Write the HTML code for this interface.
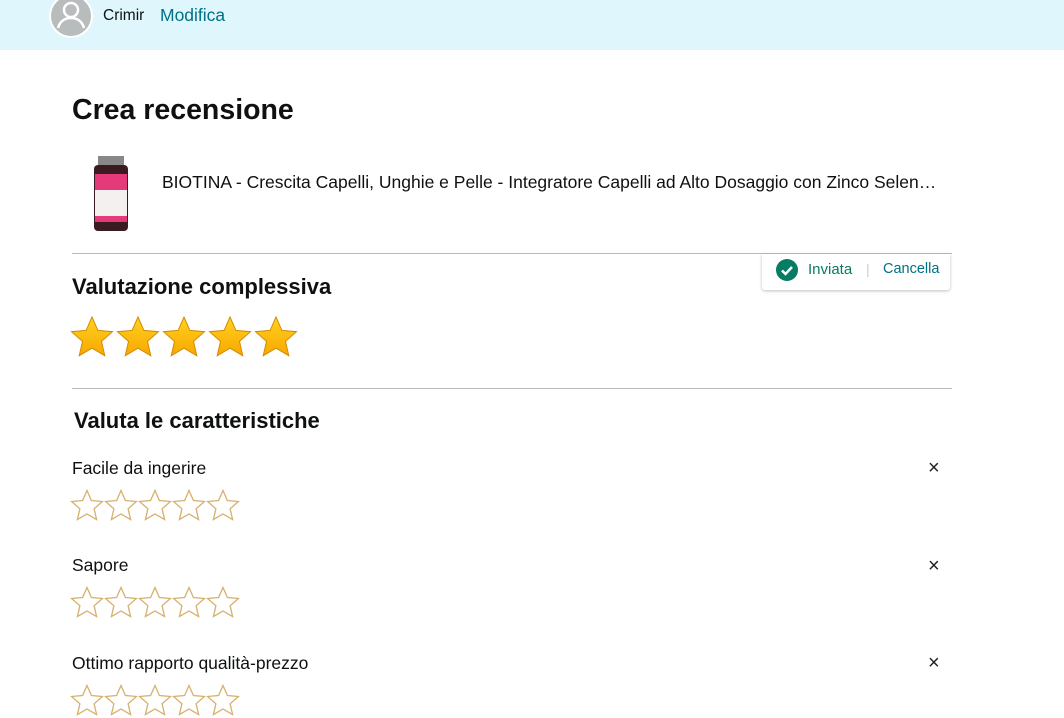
<!DOCTYPE html>
<html><head><meta charset="utf-8"><style>
body{margin:0;width:1064px;height:718px;overflow:hidden;background:#fff;font-family:"Liberation Sans",Arial,sans-serif;color:#0f1111;position:relative}
.top{position:absolute;left:0;top:0;width:1064px;height:50px;background:#dff7fc}
.abs{position:absolute}
hr{position:absolute;margin:0;border:0;border-top:1px solid #bbb;left:72px;width:880px}
.lbl{font-size:17.5px}
.x{font-size:20px;color:#222}
</style></head><body>
<div class="top"></div>
<svg class="abs" style="left:49px;top:-6px" width="44" height="44" viewBox="0 0 44 44"><circle cx="22" cy="22" r="21" fill="#b8bcbd" stroke="#fff" stroke-width="2"/><circle cx="22" cy="16" r="7" fill="none" stroke="#fff" stroke-width="2.5"/><path d="M9 34c2-7 7-10 13-10s11 3 13 10" fill="none" stroke="#fff" stroke-width="2.5"/></svg>
<div class="abs" style="left:103px;top:7px;font-size:15.5px">Crimir</div>
<div class="abs" style="left:160px;top:5px;font-size:17.5px;color:#007185">Modifica</div>
<div class="abs" style="left:72px;top:94px;font-size:28.5px;font-weight:bold">Crea recensione</div>
<svg class="abs" style="left:92px;top:156px" width="38" height="78" viewBox="0 0 38 78"><rect x="6" y="0" width="26" height="10" fill="#888"/><rect x="2" y="9" width="34" height="66" rx="4" fill="#3b1b22"/><rect x="3" y="18" width="32" height="16" fill="#e53a79"/><rect x="3" y="34" width="32" height="30" fill="#f4f0f0"/><rect x="3" y="60" width="32" height="6" fill="#e53a79"/></svg>
<div class="abs" style="left:162px;top:172px;font-size:17.5px">BIOTINA - Crescita Capelli, Unghie e Pelle - Integratore Capelli ad Alto Dosaggio con Zinco Selen…</div>
<hr style="top:253px">
<div class="abs" style="left:762px;top:254px;width:188px;height:36px;background:#fff;box-shadow:0 1px 3px rgba(0,0,0,.25);border-radius:0 0 3px 3px"></div>
<svg class="abs" style="left:776px;top:259px" width="22" height="22" viewBox="0 0 22 22"><circle cx="11" cy="11" r="11" fill="#067d62"/><path d="M6 11.5l3.5 3.5 6.5-7" fill="none" stroke="#fff" stroke-width="2.5"/></svg>
<div class="abs" style="left:808px;top:261px;font-size:15px;color:#067d62">Inviata</div>
<div class="abs" style="left:866px;top:261px;font-size:14px;color:#ccc">|</div>
<div class="abs" style="left:883px;top:261px;font-size:14.5px;color:#007185">Cancella</div>
<div class="abs" style="left:72px;top:274px;font-size:22px;font-weight:bold">Valutazione complessiva</div>
<svg class="abs" style="left:70px;top:316px" width="240" height="44" viewBox="0 0 240 44">
<defs><linearGradient id="g" x1="0" y1="0" x2="0" y2="1"><stop offset="0" stop-color="#ffd21f"/><stop offset="1" stop-color="#f7a800"/></linearGradient>
<path id="s" d="M21 1l5.9 13.4 14.6 1.3-11 9.7 3.3 14.3L21 32.2 8.2 39.7l3.3-14.3-11-9.7 14.6-1.3z"/></defs>
<use href="#s" x="1" fill="url(#g)" stroke="#d48a00"/><use href="#s" x="47" fill="url(#g)" stroke="#d48a00"/><use href="#s" x="93" fill="url(#g)" stroke="#d48a00"/><use href="#s" x="139" fill="url(#g)" stroke="#d48a00"/><use href="#s" x="185" fill="url(#g)" stroke="#d48a00"/></svg>
<hr style="top:388px">
<div class="abs" style="left:74px;top:408px;font-size:22px;font-weight:bold">Valuta le caratteristiche</div>

<div class="abs lbl" style="left:72px;top:458px">Facile da ingerire</div>
<div class="abs x" style="left:928px;top:457px">×</div>
<div class="abs lbl" style="left:72px;top:555px">Sapore</div>
<div class="abs x" style="left:928px;top:555px">×</div>
<div class="abs lbl" style="left:72px;top:653px">Ottimo rapporto qualità-prezzo</div>
<div class="abs x" style="left:928px;top:652px">×</div>

<svg class="abs" style="left:70px;top:489px" width="180" height="34" viewBox="0 0 180 34"><defs><path id="o" d="M16 1.5l4.4 10 11 1-8.3 7.3 2.5 10.8L16 25l-9.6 5.6 2.5-10.8L.6 12.5l11-1z" fill="none" stroke="#d5b16c" stroke-width="1.3"/></defs><use href="#o" x="1"/><use href="#o" x="35"/><use href="#o" x="69"/><use href="#o" x="103"/><use href="#o" x="137"/></svg>
<svg class="abs" style="left:70px;top:586px" width="180" height="34" viewBox="0 0 180 34"><use href="#o" x="1"/><use href="#o" x="35"/><use href="#o" x="69"/><use href="#o" x="103"/><use href="#o" x="137"/></svg>
<svg class="abs" style="left:70px;top:684px" width="180" height="34" viewBox="0 0 180 34"><use href="#o" x="1"/><use href="#o" x="35"/><use href="#o" x="69"/><use href="#o" x="103"/><use href="#o" x="137"/></svg>
</body></html>
